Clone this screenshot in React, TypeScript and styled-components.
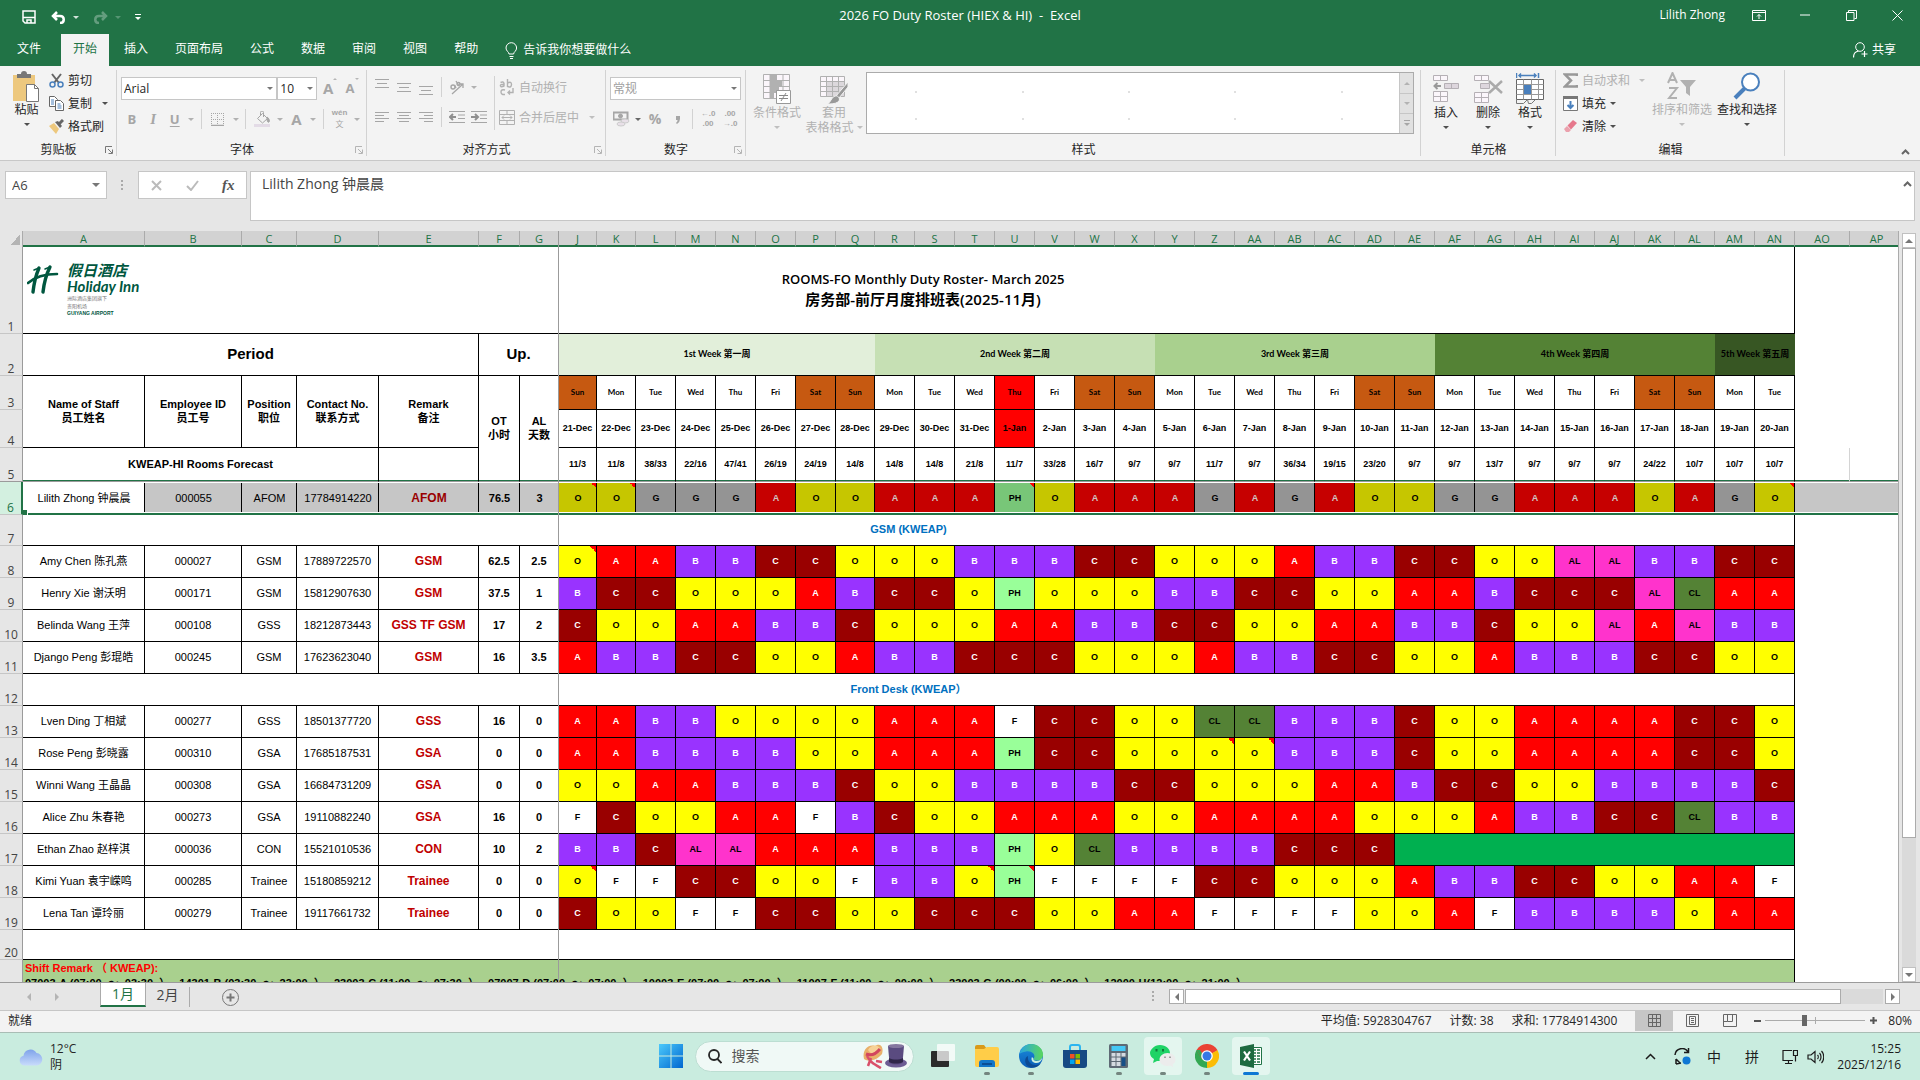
import React from "react";
import styled, { createGlobalStyle, css } from "styled-components";

const UI = `"Open Sans", "Noto Sans CJK SC", sans-serif`;
const SHEET = `"Liberation Sans", "Noto Sans CJK SC", sans-serif`;
const CALIBRI = `Lato, "Noto Sans CJK SC", sans-serif`;
const GREEN = "#217346";

const Global = createGlobalStyle`
  * { box-sizing: border-box; }
  html, body, #root { height: 100%; }
  body { margin: 0; overflow: hidden; font: 12px/16px ${UI}; color: #262626; }
  button, input, select, textarea { font: inherit; color: inherit; margin: 0; border-radius: 0; }
  button { padding: 0; border: 0; background: none; display: inline-flex; align-items: center; justify-content: center; white-space: nowrap; }
  svg { display: block; flex: none; }
`;

/* ---------- shell ---------- */
const Page = styled.div`
  height: 100vh;
  display: flex;
  flex-direction: column;
  background: #e6e6e6;
`;
const TitleBar = styled.header`
  height: 34px;
  display: grid;
  grid-template-columns: 1fr auto 1fr;
  background: ${GREEN};
  color: #fff;
`;
const QuickAccess = styled.div`
  display: flex;
  align-items: center;
  gap: 7px;
  padding-left: 22px;
`;
const QuickBtn = styled.button`
  &:disabled { color: #fff; opacity: 0.3; }
`;
const DocTitle = styled.h1`
  margin: 0;
  padding-top: 7px;
  font: inherit;
  font-size: 13px;
  white-space: pre;
`;
const WindowControls = styled.div`
  display: flex;
  justify-content: flex-end;
  height: 30px;
`;
const UserName = styled.button`
  padding-right: 11px;
`;
const WinBtn = styled.button`
  width: 46px;
`;
const TabBar = styled.nav`
  height: 32px;
  display: flex;
  gap: 3px;
  background: ${GREEN};
  color: #fff;
`;
const Tab = styled.button<{ $active?: boolean; $pad?: number }>`
  padding: 0 ${(p) => p.$pad ?? 12}px 2px;
  ${(p) => p.$active && css`background: #f3f3f3; color: ${GREEN};`}
`;
const TellMe = styled.button`
  gap: 5px;
  padding-left: 12px;
`;
const Share = styled.button`
  gap: 4px;
  margin-left: auto;
  padding-right: 24px;
`;

/* ---------- ribbon ---------- */
const Ribbon = styled.section`
  height: 95px;
  display: flex;
  background: #f3f3f3;
  border-bottom: 1px solid #c8c8c8;
`;
const GroupBox = styled.div<{ $w?: number }>`
  ${(p) => (p.$w ? `width: ${p.$w}px;` : "flex: 1; min-width: 0;")}
  display: flex;
  flex-direction: column;
  background: linear-gradient(#d2d2d2, #d2d2d2) right 4px / 1px 86px no-repeat;
`;
const GroupBody = styled.div<{ $col?: boolean; $top?: number; $gap?: number }>`
  height: 75px;
  display: flex;
  flex-direction: ${(p) => (p.$col ? "column" : "row")};
  gap: ${(p) => p.$gap ?? 0}px;
  padding: ${(p) => p.$top ?? 6}px 4px 0;
`;
const GroupFoot = styled.div`
  display: grid;
  grid-template-columns: 16px 1fr 16px;
  align-items: center;
  height: 18px;
  text-align: center;
`;
const Row = styled.div<{ $h?: number }>`
  display: flex;
  align-items: center;
  height: ${(p) => p.$h ?? 22}px;
`;
const Stack = styled.div<{ $w?: number; $gap?: number }>`
  display: flex;
  flex-direction: column;
  gap: ${(p) => p.$gap ?? 0}px;
  ${(p) => p.$w && `width: ${p.$w}px;`}
`;
const ToolBtn = styled.button<{ $w?: number }>`
  width: ${(p) => p.$w ?? 22}px;
  height: 22px;
  color: #a6a6a6;
`;
const SizeBtn = styled(ToolBtn)`
  align-items: flex-start;
`;
const CaretBtn = styled.button<{ $dark?: boolean }>`
  width: 12px;
  height: 22px;
  color: ${(p) => (p.$dark ? "#444" : "#a0a0a0")};
`;
const Sep = styled.i<{ $tall?: boolean }>`
  width: 1px;
  height: ${(p) => (p.$tall ? 54 : 20)}px;
  margin: 0 4px;
  background: #d2d2d2;
`;
const TextBtn = styled.button<{ $off?: boolean }>`
  height: 23px;
  gap: 4px;
  align-self: flex-start;
  color: ${(p) => (p.$off ? "#b1b1b1" : "#262626")};
`;
const Spacer = styled.i<{ $w: number }>`
  width: ${(p) => p.$w}px;
`;
const BigBtn = styled.button<{ $w: number; $off?: boolean }>`
  width: ${(p) => p.$w}px;
  height: 66px;
  flex-direction: column;
  justify-content: flex-start;
  color: ${(p) => (p.$off ? "#b1b1b1" : "#262626")};
`;
const BigIcon = styled.span`
  height: 33px;
  display: flex;
  align-items: center;
`;
const BigLine = styled.span`
  height: 15px;
  line-height: 15px;
  display: flex;
  align-items: center;
  gap: 3px;
`;
const SelectWrap = styled.span<{ $w: number; $off?: boolean }>`
  position: relative;
  width: ${(p) => p.$w}px;
  height: 23px;
  color: ${(p) => (p.$off ? "#a0a0a0" : "#262626")};
  select {
    width: 100%;
    height: 100%;
    padding: 0 2px;
    appearance: none;
    border: 1px solid #c6c6c6;
    background: #fff;
  }
  svg {
    position: absolute;
    right: 4px;
    top: 10px;
    color: #555;
    pointer-events: none;
  }
`;
const Gallery = styled.div`
  flex: 1;
  height: 62px;
  margin-left: 2px;
  margin-right: 3px;
  display: flex;
  border: 1px solid #ababab;
  background: #fff;
`;
const GalleryGrid = styled.div`
  flex: 1;
  display: grid;
  grid-template-columns: repeat(5, 1fr);
  padding-top: 5px;
`;
const GalleryItem = styled.button`
  padding-right: 8px;
  &::after {
    content: "";
    width: 2px;
    height: 2px;
    background: #e0e0e0;
  }
`;
const GalleryScroll = styled.div`
  width: 14px;
  display: grid;
  grid-template-rows: 1fr 1fr 1fr;
  background: #e1e1e1;
  color: #a6a6a6;
  border-left: 1px solid #c6c6c6;
  button + button { border-top: 1px solid #c6c6c6; }
`;
const Collapse = styled.button`
  width: 135px;
  align-items: flex-end;
  justify-content: flex-end;
  padding: 0 10px 5px 0;
  color: #666;
`;

/* ---------- formula bar ---------- */
const FormulaArea = styled.section`
  height: 70px;
  display: flex;
  align-items: flex-start;
  padding: 10px 5px 0;
`;
const NameBox = styled.div`
  width: 102px;
  height: 28px;
  display: flex;
  align-items: center;
  padding-right: 7px;
  border: 1px solid #c6c6c6;
  background: #fff;
  color: #555;
  input {
    width: 86px;
    padding: 0 6px;
    border: 0;
    background: none;
    color: #444;
    font-size: 13px;
  }
`;
const Dots = styled.i<{ $m: string }>`
  width: 2px;
  height: 11px;
  margin: ${(p) => p.$m};
  background: repeating-linear-gradient(#aaa 0 2px, transparent 2px 4px);
`;
const FxBox = styled.div`
  width: 109px;
  height: 28px;
  display: grid;
  grid-template-columns: repeat(3, 1fr);
  margin-right: 3px;
  border: 1px solid #c6c6c6;
  background: #fff;
  color: #555;
`;
const FormulaBox = styled.div`
  flex: 1;
  height: 50px;
  display: flex;
  border: 1px solid #c6c6c6;
  background: #fff;
  color: #666;
  textarea {
    flex: 1;
    padding: 1px 11px;
    border: 0;
    resize: none;
    outline: 0;
    background: none;
    color: #444;
    font-size: 14px;
    line-height: 22px;
  }
  button { width: 14px; height: 24px; }
`;

/* ---------- sheet ---------- */
const SheetArea = styled.main`
  flex: 1;
  min-height: 0;
  display: flex;
`;
const GridPane = styled.div`
  position: relative;
  flex: 1;
  overflow: hidden;
  background: #fff;
  border-right: 1px solid #ababab;
`;
const FreezeLine = styled.i`
  position: absolute;
  left: 558px;
  top: 0;
  bottom: 0;
  width: 1px;
  background: #9b9b9b;
`;
const Grid = styled.table`
  width: calc(100% + 6px);
  table-layout: fixed;
  border-collapse: separate;
  border-spacing: 0;
  font: 11px/14px ${SHEET};
  color: #000;
`;
const Tr = styled.tr<{ $h: number }>`
  height: ${(p) => p.$h}px;
`;
const ColHead = styled.th`
  padding: 0;
  border-right: 1px solid #ababab;
  border-bottom: 2px solid ${GREEN};
  background: #d2d2d2;
  color: ${GREEN};
  font: 11px/13px ${UI};
`;
const Corner = styled.th`
  padding: 0;
  border-right: 1px solid #ababab;
  background: linear-gradient(to bottom right, transparent 50%, #b4b4b4 50%) 11px 3px / 9px 11px no-repeat #e6e6e6;
`;
const RowHead = styled.th<{ $sel?: boolean; $frozen?: boolean }>`
  padding: 0;
  vertical-align: bottom;
  border-right: 1px solid #9b9b9b;
  border-bottom: 1px solid ${(p) => (p.$frozen ? "#9b9b9b" : "#c6c6c6")};
  background: #e6e6e6;
  color: #444;
  font: 12px/13px ${UI};
  ${(p) => p.$sel && css`background: #d3f0e0; color: ${GREEN}; border-right: 2px solid ${GREEN};`}
`;

type CellProps = {
  $bg?: string;
  $fg?: string;
  $bold?: boolean;
  $size?: number;
  $font?: string;
  $noted?: boolean;
  $edge?: "none" | "frozen" | "selected" | "bottom";
};
const edges = {
  none: css`border: 0;`,
  bottom: css`border-right: 0;`,
  frozen: css`
    border-bottom-color: #9b9b9b;
    box-shadow: inset 0 -1px ${GREEN};
  `,
  selected: css`
    border: 0;
    box-shadow: inset 0 -2px ${GREEN}, inset 0 -3px #fff, inset 0 1px #fff, inset -1px 0 #000;
  `,
};
const Cell = styled.td<CellProps>`
  position: relative;
  padding: 0 0 2px;
  overflow: hidden;
  text-align: center;
  vertical-align: middle;
  white-space: nowrap;
  border-right: 1px solid #000;
  border-bottom: 1px solid #000;
  background-color: ${(p) => p.$bg ?? "#fff"};
  ${(p) => p.$fg && `color: ${p.$fg};`}
  ${(p) => p.$bold && "font-weight: 700;"}
  ${(p) => p.$size && `font-size: ${p.$size}px;`}
  ${(p) => p.$font && `font-family: ${p.$font};`}
  ${(p) =>
    p.$noted &&
    css`
      background-image: linear-gradient(to bottom left, #f00 50%, transparent 50%);
      background-size: 6px 6px;
      background-position: right 0 top ${p.$edge === "selected" ? 1 : 0}px;
      background-repeat: no-repeat;
    `}
  ${(p) => p.$edge && edges[p.$edge]}
`;
const GuideCell = styled(Cell)<{ $last?: boolean }>`
  border-right-color: ${(p) => (p.$last ? "transparent" : "#d4d4d4")};
`;
const FillHandle = styled.i`
  position: absolute;
  left: 0;
  bottom: 0;
  width: 5px;
  height: 5px;
  background: ${GREEN};
  border-right: 1px solid #fff;
`;
const TitleCell = styled(Cell)`
  padding: 0 0 2px 29px;
  font: 600 13px/20px ${UI};
  span { font-size: 15px; }
`;
const Remarks = styled(Cell)`
  text-align: left;
  vertical-align: top;
  padding-left: 2px;
  white-space: pre;
  font-weight: 700;
`;
const RemarkTitle = styled.div`
  line-height: 16px;
  color: #f00;
`;
const Logo = styled.div`
  position: absolute;
  left: 27px;
  top: 31px;
  display: flex;
  gap: 8px;
  color: #00573f;
`;
const LogoText = styled.div`
  display: flex;
  flex-direction: column;
  b { font: italic 700 15px/16px ${CALIBRI}; }
  small { font: 5px/8px ${UI}; color: #777; }
  strong { font: 700 5px/6px ${SHEET}; }
`;

/* ---------- scroll bars ---------- */
const VScroll = styled.div`
  width: 21px;
  display: flex;
  flex-direction: column;
  padding: 2px 4px 0 3px;
  button { height: 15px; border: 1px solid #c0c0c0; background: #fff; color: #555; }
`;
const VTrack = styled.div`
  flex: 1;
  background: #dadada;
`;
const VThumb = styled.div`
  height: 82%;
  border: 1px solid #ababab;
  background: #fff;
`;
const SheetTabs = styled.div`
  height: 28px;
  display: flex;
  border-top: 1px solid #9b9b9b;
`;
const SheetNav = styled.button<{ $w: number }>`
  width: ${(p) => p.$w}px;
  height: 27px;
  color: #a8a8a8;
`;
const SheetTab = styled.button<{ $active?: boolean }>`
  width: ${(p) => (p.$active ? 46 : 43)}px;
  height: 24px;
  font-size: 14px;
  color: #444;
  ${(p) =>
    p.$active &&
    css`
      background: #fff;
      color: ${GREEN};
      border: solid #ababab;
      border-width: 0 1px;
      border-bottom: 2px solid ${GREEN};
    `}
`;
const AddSheet = styled.button`
  width: 82px;
  height: 20px;
  margin: 4px auto 0 0;
  border-left: 1px solid #ababab;
  color: #777;
`;
const HScroll = styled.div`
  width: 731px;
  height: 15px;
  margin: 6px 20px 0 0;
  display: flex;
  gap: 1px;
  button { width: 15px; border: 1px solid #ababab; background: #fff; color: #555; }
`;
const HTrack = styled.div`
  flex: 1;
  margin-right: 1px;
  background: #dadada;
`;
const HThumb = styled.div`
  width: 94%;
  height: 100%;
  border: 1px solid #ababab;
  background: #fff;
`;
const StatusBar = styled.footer`
  height: 23px;
  display: flex;
  align-items: center;
  padding: 0 8px 2px;
  background: #f3f3f3;
  border-top: 1px solid #c6c6c6;
  border-bottom: 1px solid #a9bdb5;
`;
const Stats = styled.div`
  display: flex;
  gap: 18px;
  margin: 0 18px 0 auto;
`;
const ViewBtn = styled.button<{ $on?: boolean }>`
  width: 38px;
  height: 20px;
  background: ${(p) => (p.$on ? "#c6c6c6" : "none")};
  color: #666;
`;
const ZoomBtn = styled.button`
  width: 16px;
  height: 20px;
  color: #555;
`;
const ZoomRange = styled.input`
  width: 100px;
  height: 20px;
  appearance: none;
  background: linear-gradient(#ababab, #ababab) 50px 50% / 1px 7px no-repeat,
    linear-gradient(#ababab, #ababab) 0 50% / 100% 1px no-repeat;
  &::-webkit-slider-thumb {
    appearance: none;
    width: 5px;
    height: 11px;
    background: #666;
  }
`;
const ZoomText = styled.button`
  margin-left: 7px;
`;

/* ---------- taskbar ---------- */
const Taskbar = styled.div`
  height: 47px;
  display: grid;
  grid-template-columns: 1fr auto 1fr;
  align-items: center;
  background: #c9ecdf;
`;
const Weather = styled.button`
  justify-self: start;
  gap: 7px;
  padding-left: 19px;
  text-align: left;
`;
const Apps = styled.div`
  display: flex;
  align-items: center;
  padding: 0 0 1px 11px;
`;
const AppBtn = styled.button<{ $on?: boolean }>`
  position: relative;
  width: 38px;
  height: 38px;
  margin: 0 3px;
  border-radius: 4px;
  background: ${(p) => (p.$on ? "rgba(255,255,255,.5)" : "none")};
`;
const RunMark = styled.i<{ $active?: boolean }>`
  position: absolute;
  bottom: 0;
  left: 50%;
  transform: translateX(-50%);
  width: ${(p) => (p.$active ? 16 : 6)}px;
  height: 3px;
  border-radius: 2px;
  background: ${(p) => (p.$active ? "#0f78d4" : "#74857f")};
`;
const SearchPill = styled.label`
  width: 219px;
  height: 31px;
  margin: 0 7px 0 12px;
  display: flex;
  align-items: center;
  gap: 10px;
  padding: 0 5px 0 12px;
  border-radius: 16px;
  background: #f0f9f6;
  border: 1px solid #bcded2;
  input {
    flex: 1;
    min-width: 0;
    padding: 0;
    border: 0;
    background: none;
    font-size: 14px;
  }
  input::placeholder { color: #555; opacity: 1; }
`;
const Tray = styled.div`
  justify-self: end;
  display: flex;
  align-items: center;
  padding-right: 19px;
  color: #1b1b1b;
`;
const TrayBtn = styled.button<{ $w: number }>`
  width: ${(p) => p.$w}px;
  font-size: 14px;
`;
const Clock = styled.time`
  width: 77px;
  text-align: right;
`;

/* ---------- icons ---------- */
type IconProps = { w: number; h: number; children: React.ReactNode; sw?: number };
const Svg = ({ w, h, sw = 1, children }: IconProps) => (
  <svg width={w} height={h} viewBox={`0 0 ${w} ${h}`} fill="none" stroke="currentColor" strokeWidth={sw} aria-hidden="true">
    {children}
  </svg>
);
const Tri = ({ dir = "down", s = 3 }: { dir?: "down" | "up" | "left" | "right"; s?: number }) => {
  const d = {
    down: `M0 0h${2 * s}l-${s} ${s}z`,
    up: `M0 ${s}h${2 * s}l-${s} -${s}z`,
    left: `M${s} 0v${2 * s}l-${s} -${s}z`,
    right: `M0 0v${2 * s}l${s} -${s}z`,
  }[dir];
  const flat = dir === "down" || dir === "up";
  return (
    <Svg w={flat ? 2 * s : s} h={flat ? s : 2 * s}>
      <path d={d} fill="currentColor" fillOpacity=".8" stroke="none" />
    </Svg>
  );
};
const Chevron = () => (
  <Svg w={9} h={6} sw={2}><path d="M1 5l3.500-3.500L8 5" /></Svg>
);
/* Text-alignment glyph: each entry is [y, x start, x end]. */
const Lines = ({ rows }: { rows: [number, number, number][] }) => (
  <Svg w={14} h={16}>
    {rows.map(([y, a, b]) => <path key={y} d={`M${a} ${y + 0.5}H${b}`} />)}
  </Svg>
);
const Launcher = ({ off }: { off?: boolean }) => (
  <Svg w={8} h={8}>
    <path d="M.5 7V.5H7M3 3l4 4M7.500 3.500v4h-4" stroke={off ? "#b4b4b4" : "#777"} />
  </Svg>
);
const Indent = ({ right }: { right?: boolean }) => (
  <Svg w={16} h={14}>
    <path d="M0 1.500h16M9 5h7M9 8.500h7M0 12.500h16" />
    <path d={right ? "M0 7h6M4 4l3 3-3 3" : "M7 7H1M4 4L1 7l3 3"} strokeWidth="2" stroke="#8f8f8f" />
  </Svg>
);

const LogoMark = () => (
  <svg width="32" height="32" viewBox="0 0 32 32" aria-hidden="true">
    <g fill="none" stroke="#00573f" strokeLinecap="round">
      <path d="M12 6C9 13 7 21 6 30" strokeWidth="3.400" />
      <path d="M23 5c-4 8-6 16-7 25" strokeWidth="3.400" />
      <path d="M1 21C9 14 19 12 30 12" strokeWidth="2.600" />
      <path d="M7 8l5-2M18 7l5-2" strokeWidth="1.600" />
    </g>
  </svg>
);

/* ---------- roster data ---------- */
const colWidths = [23, 122, 97, 55, 82, 100, 41, 39, 38, 39, 40, 40, 40, 40, 40, 39, ...Array(23).fill(40), 55];
const colNames =
  "A B C D E F G J K L M N O P Q R S T U V W X Y Z AA AB AC AD AE AF AG AH AI AJ AK AL AM AN AO AP".split(" ");
const weekdays = ["Sun", "Mon", "Tue", "Wed", "Thu", "Fri", "Sat"];
const days = Array.from({ length: 31 }, (_, i) => ({
  name: weekdays[i % 7],
  date: i < 11 ? `${21 + i}-Dec` : `${i - 10}-Jan`,
  color: i === 11 ? "#ff0000" : i % 7 === 0 || i % 7 === 6 ? "#c65911" : "#fff",
}));
const weeks: [string, number, string][] = [
  ["1st Week 第一周", 8, "#e2efda"],
  ["2nd Week 第二周", 7, "#c6e0b4"],
  ["3rd Week 第三周", 7, "#a9d08e"],
  ["4th Week 第四周", 7, "#548235"],
  ["5th Week 第五周", 2, "#375623"],
];
const forecast =
  "11/3 11/8 38/33 22/16 47/41 26/19 24/19 14/8 14/8 14/8 21/8 11/7 33/28 16/7 9/7 9/7 11/7 9/7 36/34 19/15 23/20 9/7 9/7 13/7 9/7 9/7 9/7 24/22 10/7 10/7 10/7".split(" ");

const shiftColors: Record<string, [string, string]> = {
  A: ["#ff0000", "#fff"],
  B: ["#9933ff", "#fff"],
  C: ["#990000", "#fff"],
  O: ["#ffff00", "#000"],
  G: ["#bfbfbf", "#000"],
  F: ["#fff", "#000"],
  PH: ["#99ff99", "#000"],
  AL: ["#ff33cc", "#000"],
  CL: ["#548235", "#000"],
};
const selectedColors: Record<string, [string, string]> = {
  A: ["#c60000", "#d0c6c6"],
  O: ["#c6c600", "#000"],
  G: ["#949494", "#000"],
  PH: ["#78c678", "#000"],
};

type Person = { row: number; info: string[]; shifts: string; leave?: number };
const lead: Person = {
  row: 6,
  info: ["Lilith Zhong 钟晨晨", "000055", "AFOM", "17784914220", "AFOM", "76.5", "3"],
  shifts: "O* O* G G G A O O A A A PH* O A A A G A G A O O G G A A A O A G O*",
};
const gsm: Person[] = [
  { row: 8, info: ["Amy Chen 陈孔燕", "000027", "GSM", "17889722570", "GSM", "62.5", "2.5"], shifts: "O* A A B B C C O O O B B B C C O O O A B B C C O O AL AL B B C C" },
  { row: 9, info: ["Henry Xie 谢沃明", "000171", "GSM", "15812907630", "GSM", "37.5", "1"], shifts: "B C C O O O A B C C O PH O O O B B C C O O A A B C C C AL CL A A" },
  { row: 10, info: ["Belinda Wang 王萍", "000108", "GSS", "18212873443", "GSS TF GSM", "17", "2"], shifts: "C O O A A B B C O O O A A B B C C O O A A B B C O O AL A AL B B" },
  { row: 11, info: ["Django Peng 彭琨皓", "000245", "GSM", "17623623040", "GSM", "16", "3.5"], shifts: "A B B C C O O A B B C C C O O O A B B C C O O A B B B C C O O" },
];
const desk: Person[] = [
  { row: 13, info: ["Lven Ding 丁相斌", "000277", "GSS", "18501377720", "GSS", "16", "0"], shifts: "A A B B O O O O A A A F C C O O CL CL B B B C O O A A A A C C O" },
  { row: 14, info: ["Rose Peng 彭晓露", "000310", "GSA", "17685187531", "GSA", "0", "0"], shifts: "A A B B B B O O A A A PH C C O O O* O* B B B C O O A A A A C C O" },
  { row: 15, info: ["Winni Wang 王晶晶", "000308", "GSA", "16684731209", "GSA", "0", "0"], shifts: "O O A A B B B C O O B B B B C C O O O A A B C C O O B B B B C" },
  { row: 16, info: ["Alice Zhu 朱春艳", "000273", "GSA", "19110882240", "GSA", "16", "0"], shifts: "F C O O A A F B C O O A A A O O A A A A O O O A B B C C CL B B" },
  { row: 17, info: ["Ethan Zhao 赵梓淇", "000036", "CON", "15521010536", "CON", "10", "2"], shifts: "B B C AL AL A A A B B B PH O CL B B B B C C C", leave: 10 },
  { row: 18, info: ["Kimi Yuan 袁宇嵘鸣", "000285", "Trainee", "15180859212", "Trainee", "0", "0"], shifts: "O* F F C C O O F B B O* PH* F F F F C C O O O A B B C C O O A A F" },
  { row: 19, info: ["Lena Tan 谭玲丽", "000279", "Trainee", "19117661732", "Trainee", "0", "0"], shifts: "C O O F F C C O O C C C O O A A F F F F O O A F B B B B O A A" },
];
const remarks = [
  "07003-A (07:00  ～  03:30  ）",
  "14301-B (03:30  ～  23:00  ）",
  "23003-C (11:00  ～  07:30  ）",
  "07007-D (07:00  ～  07:00  ）",
  "10003-E (07:00  ～  07:00  ）",
  "11007-F (11:00  ～  00:00  ）",
  "23003-G (00:00  ～  06:00  ）",
  "12000-H(12:00  ～  21:00  ）",
].join("   ");

const PersonRow = ({ p, selected }: { p: Person; selected?: boolean }) => {
  const edge = selected ? "selected" : undefined;
  return (
    <Tr $h={selected ? 33 : 32}>
      <RowHead $sel={selected}>{p.row}</RowHead>
      {p.info.map((text, i) => (
        <Cell
          key={i}
          $edge={edge}
          $bg={selected && i > 0 ? "#c6c6c6" : undefined}
          $fg={i === 4 ? (selected ? "#990000" : "#c00000") : undefined}
          $bold={i >= 4}
          $size={i === 4 ? 12 : undefined}
        >
          {text}
          {selected && i === 0 && <FillHandle />}
        </Cell>
      ))}
      {p.shifts.split(" ").map((mark, i) => {
        const code = mark.replace("*", "");
        const [bg, fg] = (selected ? selectedColors : shiftColors)[code];
        return (
          <Cell key={i} $edge={edge} $bg={bg} $fg={fg} $bold $size={9} $noted={mark.endsWith("*")}>
            {code}
          </Cell>
        );
      })}
      {p.leave && <Cell colSpan={p.leave} $bg="#00b050" />}
      {selected ? <SelectedTail colSpan={2} /> : <Cell colSpan={2} $edge="none" />}
    </Tr>
  );
};
const SelectedTail = styled.td`
  padding: 0;
  background: #c6c6c6;
  box-shadow: inset 0 -2px ${GREEN}, inset 0 -3px #fff, inset 0 1px #fff;
`;
const BandRow = ({ row, h, text }: { row: number; h: number; text?: string }) => (
  <Tr $h={h}>
    <RowHead>{row}</RowHead>
    <Cell colSpan={38} $bold $fg="#0070c0">{text}</Cell>
    <Cell colSpan={2} $edge="none" />
  </Tr>
);

const Sheet = () => (
  <Grid>
    <colgroup>
      {colWidths.map((w, i) => <col key={i} style={{ width: w }} />)}
      <col />
    </colgroup>
    <thead>
      <Tr $h={16}>
        <Corner />
        {colNames.map((c) => <ColHead key={c}>{c}</ColHead>)}
      </Tr>
    </thead>
    <tbody>
      <Tr $h={87}>
        <RowHead>1</RowHead>
        <TitleCell colSpan={38}>
          ROOMS-FO Monthly Duty Roster- March 2025
          <br />
          <span>房务部-前厅月度排班表(2025-11月)</span>
        </TitleCell>
        <Cell colSpan={2} $edge="none" />
      </Tr>
      <Tr $h={42}>
        <RowHead>2</RowHead>
        <Cell colSpan={5} $bold $size={15}>Period</Cell>
        <Cell colSpan={2} $bold $size={15}>Up.</Cell>
        {weeks.map(([name, span, bg]) => (
          <Cell key={name} colSpan={span} $bg={bg} $bold $size={9} $font={CALIBRI} $edge="bottom">{name}</Cell>
        ))}
        <Cell colSpan={2} $edge="none" />
      </Tr>
      <Tr $h={34}>
        <RowHead>3</RowHead>
        <Cell rowSpan={2} $bold>Name of Staff<br />员工姓名</Cell>
        <Cell rowSpan={2} $bold>Employee ID<br />员工号</Cell>
        <Cell rowSpan={2} $bold>Position<br />职位</Cell>
        <Cell rowSpan={2} $bold>Contact No.<br />联系方式</Cell>
        <Cell rowSpan={2} $bold>Remark<br />备注</Cell>
        <Cell rowSpan={3} $bold $edge="frozen">OT<br />小时</Cell>
        <Cell rowSpan={3} $bold $edge="frozen">AL<br />天数</Cell>
        {days.map((d) => <Cell key={d.date} $bg={d.color} $bold $size={8} $font={CALIBRI}>{d.name}</Cell>)}
        <Cell colSpan={2} $edge="none" />
      </Tr>
      <Tr $h={38}>
        <RowHead>4</RowHead>
        {days.map((d, i) => (
          <Cell key={d.date} $bg={i === 11 ? d.color : undefined} $bold $size={9}>{d.date}</Cell>
        ))}
        <Cell colSpan={2} $edge="none" />
      </Tr>
      <Tr $h={34}>
        <RowHead $frozen>5</RowHead>
        <Cell colSpan={4} $bold $edge="frozen">KWEAP-HI Rooms Forecast</Cell>
        <Cell $edge="frozen" />
        {forecast.map((f, i) => <Cell key={i} $bold $size={9} $edge="frozen">{f}</Cell>)}
        <GuideCell $edge="frozen" />
        <GuideCell $edge="frozen" $last />
      </Tr>
      <PersonRow p={lead} selected />
      <BandRow row={7} h={31} text="GSM (KWEAP)" />
      {gsm.map((p) => <PersonRow key={p.row} p={p} />)}
      <BandRow row={12} h={32} text="Front Desk (KWEAP）" />
      {desk.map((p) => <PersonRow key={p.row} p={p} />)}
      <BandRow row={20} h={30} />
      <Tr $h={120}>
        <RowHead>21</RowHead>
        <Remarks colSpan={38} $bg="#a9d08e">
          <RemarkTitle>Shift Remark （ KWEAP):</RemarkTitle>
          {remarks}
        </Remarks>
        <Cell colSpan={2} $edge="none" />
      </Tr>
    </tbody>
  </Grid>
);

/* ---------- ribbon content ---------- */
const Group = ({ name, w, launcher, children }: { name: string; w?: number; launcher?: "on" | "off"; children: React.ReactNode }) => (
  <GroupBox $w={w}>
    {children}
    <GroupFoot>
      <span />
      <span>{name}</span>
      {launcher && <button aria-label={`${name}设置`}><Launcher off={launcher === "off"} /></button>}
    </GroupFoot>
  </GroupBox>
);
const Pick = ({ w, label, value, off }: { w: number; label: string; value: string; off?: boolean }) => (
  <SelectWrap $w={w} $off={off}>
    <select aria-label={label} defaultValue={value}><option>{value}</option></select>
    <Tri />
  </SelectWrap>
);
const Letter = styled.span<{ $i?: boolean; $u?: boolean; $s?: number }>`
  font: 700 ${(p) => p.$s ?? 13}px/20px ${UI};
  ${(p) => p.$i && `font-style: italic; font-family: "Liberation Serif", serif; font-size: 15px;`}
  ${(p) => p.$u && "text-decoration: underline; text-underline-offset: 2px;"}
`;
const Tiny = styled.span`
  display: flex;
  flex-direction: column;
  align-items: center;
  font: 700 8px/10px ${SHEET};
`;
const TinyHan = styled.span`
  font: 8px/12px "Noto Sans CJK SC", sans-serif;
`;

const RibbonContent = () => (
  <Ribbon>
    <Group name="剪贴板" w={117} launcher="on">
      <GroupBody $top={3}>
        <BigBtn $w={45}>
          <BigIcon>
            <Svg w={30} h={32}>
              <path d="M1 5h22v26H1z" fill="#edc87e" stroke="none" />
              <path d="M5 8V4h4a3 3 0 016 0h4v4z" fill="#777" stroke="none" />
              <path d="M14.500 14.500h8l4 4v13h-12z" fill="#fff" stroke="#777" />
              <path d="M22.500 14.500v4h4" stroke="#777" />
            </Svg>
          </BigIcon>
          <BigLine>粘贴</BigLine>
          <BigLine><Tri /></BigLine>
        </BigBtn>
        <Stack>
          <TextBtn>
            <Svg w={15} h={15}>
              <path d="M3 1l7 9M12 1L5 10" stroke="#666" strokeWidth="2" />
              <circle cx="3.500" cy="11.500" r="2.500" stroke="#4a80bd" strokeWidth="1.500" />
              <circle cx="11.500" cy="11.500" r="2.500" stroke="#4a80bd" strokeWidth="1.500" />
            </Svg>
            剪切
          </TextBtn>
          <TextBtn>
            <Svg w={15} h={15}>
              <path d="M.5.500h5l3 3v7h-8z" fill="#fff" stroke="#666" />
              <path d="M6.500 4.500h5l3 3v7h-8z" fill="#fff" stroke="#666" />
              <path d="M2 4h3M2 6h3M2 8h3M8.500 8h3M8.500 10h4M8.500 12h4" stroke="#4a80bd" />
            </Svg>
            复制 <Spacer $w={2} /> <Tri />
          </TextBtn>
          <TextBtn>
            <Svg w={15} h={15}>
              <path d="M0 7l5-3 5 6-3 5z" fill="#edc87e" stroke="none" />
              <path d="M6 3l3-1 4 5-2 2z" fill="#666" stroke="none" />
              <path d="M10 5l4-4" stroke="#666" strokeWidth="3" />
            </Svg>
            格式刷
          </TextBtn>
        </Stack>
      </GroupBody>
    </Group>

    <Group name="字体" w={250} launcher="off">
      <GroupBody $col $top={11} $gap={8}>
        <Row $h={23}>
          <Pick w={157} label="字体名称" value="Arial" />
          <Pick w={40} label="字号" value="10" />
          <Spacer $w={2} />
          <SizeBtn aria-label="增大字号"><Letter $s={15}>A</Letter><Tri dir="up" s={2} /></SizeBtn>
          <SizeBtn aria-label="减小字号"><Letter>A</Letter><Tri s={2} /></SizeBtn>
        </Row>
        <Row>
          <ToolBtn aria-label="加粗"><Letter>B</Letter></ToolBtn>
          <ToolBtn aria-label="倾斜"><Letter $i>I</Letter></ToolBtn>
          <ToolBtn aria-label="下划线"><Letter $u>U</Letter></ToolBtn>
          <CaretBtn aria-label="下划线样式"><Tri /></CaretBtn>
          <Sep />
          <ToolBtn $w={24} aria-label="边框">
            <Svg w={13} h={13}>
              <path d="M.5 0v12M6.500 0v12M12.500 0v12M0 .500h13M0 6.500h13" strokeDasharray="1 1" />
              <path d="M0 12.500h13" strokeWidth="1.500" />
            </Svg>
          </ToolBtn>
          <CaretBtn aria-label="边框样式"><Tri /></CaretBtn>
          <Sep />
          <ToolBtn $w={24} aria-label="填充颜色">
            <Svg w={17} h={16}>
              <path d="M3.500 7.500l5-5 5 5-5 4.500zM6.500 5V1.500a1.500 1.500 0 013 0V6" fill="none" />
              <path d="M13 6c2 1 3 4 2 5s-2-1-2-3z" fill="currentColor" />
              <path d="M0 13h16v3H0z" fill="#e3dbe6" stroke="none" />
            </Svg>
          </ToolBtn>
          <CaretBtn aria-label="填充颜色列表"><Tri /></CaretBtn>
          <ToolBtn aria-label="字体颜色"><Letter $s={15}>A</Letter></ToolBtn>
          <CaretBtn aria-label="字体颜色列表"><Tri /></CaretBtn>
          <Sep />
          <ToolBtn $w={24} aria-label="拼音"><Tiny><span>wén</span><TinyHan>文</TinyHan></Tiny></ToolBtn>
          <CaretBtn aria-label="拼音设置"><Tri /></CaretBtn>
        </Row>
      </GroupBody>
    </Group>

    <Group name="对齐方式" w={239} launcher="off">
      <GroupBody $top={10}>
        <Stack $w={119} $gap={8}>
          <Row>
            <ToolBtn aria-label="顶端对齐"><Lines rows={[[0, 0, 14], [4, 2, 12], [8, 0, 14]]} /></ToolBtn>
            <ToolBtn aria-label="垂直居中"><Lines rows={[[4, 0, 14], [8, 2, 12], [12, 0, 14]]} /></ToolBtn>
            <ToolBtn aria-label="底端对齐"><Lines rows={[[7, 0, 14], [11, 2, 12], [15, 0, 14]]} /></ToolBtn>
            <Sep />
            <ToolBtn aria-label="方向">
              <Svg w={16} h={15}>
                <path d="M3 14L14 4M10 4h4v4" strokeWidth="1.300" />
                <circle cx="4" cy="7" r="2" strokeWidth="1.400" />
                <path d="M5.500 5l1.500 3M7 1l3 5" strokeWidth="1.400" />
                <circle cx="9.500" cy="4" r="1.500" strokeWidth="1.300" />
              </Svg>
            </ToolBtn>
            <CaretBtn aria-label="方向选项"><Tri /></CaretBtn>
          </Row>
          <Row>
            <ToolBtn aria-label="左对齐"><Lines rows={[[3, 0, 14], [6, 0, 9], [9, 0, 14], [12, 0, 9]]} /></ToolBtn>
            <ToolBtn aria-label="居中"><Lines rows={[[3, 0, 14], [6, 2, 12], [9, 0, 14], [12, 2, 12]]} /></ToolBtn>
            <ToolBtn aria-label="右对齐"><Lines rows={[[3, 0, 14], [6, 5, 14], [9, 0, 14], [12, 5, 14]]} /></ToolBtn>
            <Sep />
            <ToolBtn aria-label="减少缩进量"><Indent /></ToolBtn>
            <ToolBtn aria-label="增加缩进量"><Indent right /></ToolBtn>
          </Row>
        </Stack>
        <Sep $tall />
        <Stack $gap={7}>
          <TextBtn $off>
            <Svg w={16} h={17} sw={1.4}>
              <path d="M1.500 3.500q3-1.500 3.500 1v3M5 5.500H3q-2 0-1.500 1.500T5 7M8.500 0v8M8.500 4q4-2 4 1.500t-4 2" />
              <path d="M6 11q-4-1-4 2t4 2.500M14 9v4.500H9M11 11.500l-2 2 2 2" />
            </Svg>
            自动换行
          </TextBtn>
          <TextBtn $off>
            <Svg w={16} h={15}><path d="M.5.500h15v14H.500zM.5 4.500h15M.5 10.500h15M8 .500v4M8 10.500v4M3 7.500h10M5 5.500l-2 2 2 2M11 5.500l2 2-2 2" /></Svg>
            合并后居中 <Spacer $w={2} /> <Tri />
          </TextBtn>
        </Stack>
      </GroupBody>
    </Group>

    <Group name="数字" w={140} launcher="off">
      <GroupBody $col $top={11} $gap={8}>
        <Row $h={23}><Pick w={131} label="数字格式" value="常规" off /></Row>
        <Row>
          <ToolBtn aria-label="会计数字格式">
            <Svg w={17} h={16}>
              <path d="M.5 1.500h14v7H.500z" strokeWidth="2" />
              <circle cx="7.500" cy="5" r="2" fill="currentColor" />
              <ellipse cx="12" cy="10" rx="4" ry="2" fill="#e8e0e8" stroke="#ccc" />
              <ellipse cx="8" cy="13" rx="4" ry="2" fill="#e8e0e8" stroke="#ccc" />
            </Svg>
          </ToolBtn>
          <CaretBtn $dark aria-label="货币列表"><Tri /></CaretBtn>
          <ToolBtn aria-label="百分比"><Letter $s={14}>%</Letter></ToolBtn>
          <ToolBtn aria-label="千位分隔">
            <Svg w={5} h={9}><path d="M1 1h4v3q0 3-3 5l-1-1q2-2 1.500-3H1z" fill="currentColor" stroke="none" /></Svg>
          </ToolBtn>
          <Sep />
          <ToolBtn aria-label="增加小数位数"><Tiny><span>←.0</span><span>.00</span></Tiny></ToolBtn>
          <ToolBtn aria-label="减少小数位数"><Tiny><span>.00</span><span>→.0</span></Tiny></ToolBtn>
        </Row>
      </GroupBody>
    </Group>

    <Group name="样式">
      <GroupBody>
        <BigBtn $w={54} $off>
          <BigIcon>
            <Svg w={30} h={31}>
              <path d="M1.500 1.500h26v24h-26z" fill="#fbf6fb" />
              <path d="M1.500 7.500h26M1.500 13.500h26M1.500 19.500h26M8 1.500v24M14.500 1.500v24M21 1.500v24" />
              <path d="M8 2h6v5H8zM8 8h12v5H8zM8 14h9v5H8zM8 20h4v5H8z" fill="currentColor" stroke="none" />
              <path d="M14.500 17.500h14v13h-14z" fill="#fff" stroke="#999" />
              <path d="M17 22.500h9M17 25.500h9M24 20l-5 8" stroke="#888" />
            </Svg>
          </BigIcon>
          <BigLine>条件格式</BigLine>
          <BigLine><Tri /></BigLine>
        </BigBtn>
        <BigBtn $w={60} $off>
          <BigIcon>
            <Svg w={30} h={30}>
              <path d="M1.500 2.500h24v20h-24z" fill="#fbf6fb" />
              <path d="M8 8h17v14H8z" fill="#dcd8dc" stroke="none" />
              <path d="M1.500 7.500h24M1.500 12.500h24M1.500 17.500h24M7.500 2.500v20M13.500 2.500v20M19.500 2.500v20" />
              <path d="M29 8L17 22l3 2L29 13z" fill="#999" stroke="#f3f3f3" />
              <path d="M8 30c4-1 4-7 8-8s6 4 3 6-7 2-11 2z" fill="#999" stroke="#f3f3f3" />
            </Svg>
          </BigIcon>
          <BigLine>套用</BigLine>
          <BigLine>表格格式 <Tri /></BigLine>
        </BigBtn>
        <Gallery>
          <GalleryGrid>
            {Array.from({ length: 10 }, (_, i) => <GalleryItem key={i} aria-label={`样式 ${i + 1}`} />)}
          </GalleryGrid>
          <GalleryScroll>
            <button aria-label="向上"><Tri dir="up" /></button>
            <button aria-label="向下"><Tri /></button>
            <button aria-label="更多">
              <Svg w={6} h={7}><path d="M0 .500h6" /><path d="M0 3h6L3 6z" fill="currentColor" stroke="none" /></Svg>
            </button>
          </GalleryScroll>
        </Gallery>
      </GroupBody>
    </Group>

    <Group name="单元格" w={135}>
      <GroupBody>
        <BigBtn $w={42}>
          <BigIcon>
            <Svg w={28} h={28}>
              <g stroke="#b5b0b5" fill="#fbf6fb">
                <path d="M1.500.500h14v5h-14zM8.500.500v5M1.500 16.500h14v10h-14zM8.500 16.500v10M1.500 21.500h14" />
                <path d="M12.500 8.500h14v5h-14zM19.500 8.500v5" fill="#ddd6dd" />
              </g>
              <path d="M9 11H3M5.500 8L2.500 11l3 3" stroke="#999" strokeWidth="2" />
            </Svg>
          </BigIcon>
          <BigLine>插入</BigLine>
          <BigLine><Tri /></BigLine>
        </BigBtn>
        <BigBtn $w={42}>
          <BigIcon>
            <Svg w={30} h={28}>
              <g stroke="#b5b0b5" fill="#fbf6fb">
                <path d="M1.500.500h14v5h-14zM8.500.500v5M1.500 17.500h14v10h-14zM8.500 17.500v10M1.500 22.500h14" />
                <path d="M7.500 8.500h9v5h-9z" fill="#ddd6dd" />
              </g>
              <path d="M16 6l13 12M29 6L16 18" stroke="#aaa" strokeWidth="2.500" />
            </Svg>
          </BigIcon>
          <BigLine>删除</BigLine>
          <BigLine><Tri /></BigLine>
        </BigBtn>
        <BigBtn $w={42}>
          <BigIcon>
            <Svg w={28} h={31}>
              <path d="M.5 0v5M22.500 0v5M3 2.500h17M5 .500l-2 2 2 2M18 .500l2 2-2 2" stroke="#4a80bd" strokeWidth="1.500" />
              <path d="M.5 6.500h27v20H.500z" fill="#fff" stroke="#666" />
              <path d="M.5 11.500h27M.5 21.500h27M7.500 6.500v20M15.500 6.500v20M22.500 6.500v20M.5 16.500h7M15.500 16.500h12" stroke="#999" />
              <path d="M8 12h7v9H8z" fill="#4a80bd" stroke="none" />
              <path d="M.5 26.500v4h7l4-4 1 4h3l4-4" stroke="#777" />
            </Svg>
          </BigIcon>
          <BigLine>格式</BigLine>
          <BigLine><Tri /></BigLine>
        </BigBtn>
      </GroupBody>
    </Group>

    <Group name="编辑" w={229}>
      <GroupBody $top={3}>
        <Spacer $w={3} />
        <Stack $w={87}>
          <TextBtn $off>
            <Svg w={15} h={15} sw={2.5}><path d="M14 3V1.500H2L8 7.500l-6 6h12V12" stroke="#999" /></Svg>
            自动求和 <Spacer $w={1} /> <Tri />
          </TextBtn>
          <TextBtn>
            <Svg w={15} h={15}>
              <path d="M.5.500h14v14H.500z" fill="#fff" stroke="#777" />
              <path d="M0 0h15v3H0z" fill="#777" stroke="none" />
              <path d="M7.500 5v7M4.500 9l3 3 3-3" stroke="#4a80bd" strokeWidth="2" />
            </Svg>
            填充 <Tri />
          </TextBtn>
          <TextBtn>
            <Svg w={15} h={15}>
              <path d="M1 10l3-3 4 4-2 2H3z" fill="#eba1ad" stroke="none" />
              <path d="M4.500 6.500L10 1l4 3-6 6.500z" fill="#e6788c" stroke="none" />
            </Svg>
            清除 <Tri />
          </TextBtn>
        </Stack>
        <BigBtn $w={64} $off>
          <BigIcon>
            <Svg w={30} h={28} sw={2}>
              <path d="M1 11L5.500 1 10 11M3 8h5M2 16h8L2 26h8" />
              <path d="M13 8h16l-6 7v9l-4-3v-6z" fill="currentColor" stroke="none" />
            </Svg>
          </BigIcon>
          <BigLine>排序和筛选</BigLine>
          <BigLine><Tri /></BigLine>
        </BigBtn>
        <BigBtn $w={66}>
          <BigIcon>
            <Svg w={28} h={28}>
              <circle cx="17.500" cy="10" r="8.500" fill="#fff" stroke="#4a80bd" strokeWidth="2" />
              <path d="M11.500 16.500L2 26" stroke="#4a80bd" strokeWidth="4" />
            </Svg>
          </BigIcon>
          <BigLine>查找和选择</BigLine>
          <BigLine><Tri /></BigLine>
        </BigBtn>
      </GroupBody>
    </Group>
    <Collapse aria-label="折叠功能区"><Chevron /></Collapse>
  </Ribbon>
);

/* ---------- taskbar icons ---------- */
const Hats = () => (
  <svg width="46" height="28" viewBox="0 0 46 28" aria-hidden="true">
    <path d="M2 17C0 8 6 2 13 4c6-4 9 2 7 8-4 5-12 9-18 5z" fill="#e9b06a" />
    <path d="M6 8c3-6 11-6 13 0-3 5-8 7-13 0z" fill="#f7d197" />
    <path d="M4 12c5 2 10 0 14-5" stroke="#d2455d" strokeWidth="3" fill="none" />
    <path d="M5 14c3 6 7 8 14 12M9 16l-3 8M14 19l6 1" stroke="#d9506a" strokeWidth="2.500" fill="none" />
    <ellipse cx="34" cy="21" rx="11" ry="4.500" fill="#6c5c93" />
    <path d="M26 4h16l-1.500 17c-4 2-9 2-13 0z" fill="#5a4b80" />
    <ellipse cx="34" cy="4" rx="8" ry="2" fill="#85769f" />
    <path d="M27 16c4 2 10 2 14 0v4c-4 2-10 2-14 0z" fill="#2f2649" />
  </svg>
);
const WinLogo = () => (
  <svg width="24" height="24" viewBox="0 0 24 24" aria-hidden="true">
    <defs><linearGradient id="win" x1="0" y1="0" x2="1" y2="1"><stop stopColor="#4cc9fb" /><stop offset="1" stopColor="#0067d0" /></linearGradient></defs>
    <path d="M0 0h11.500v11.500H0zM12.500 0H24v11.500H12.500zM0 12.500h11.500V24H0zM12.500 12.500H24V24H12.500z" fill="url(#win)" />
  </svg>
);
const TaskViewIcon = () => (
  <svg width="24" height="24" viewBox="0 0 24 24" aria-hidden="true">
    <rect x="0" y="7" width="18" height="16" rx="1" fill="#2b2b2b" />
    <rect x="6" y="0" width="18" height="17" rx="1" fill="#fff" fillOpacity=".75" />
  </svg>
);
const FolderIcon = () => (
  <svg width="24" height="24" viewBox="0 0 24 24" aria-hidden="true">
    <path d="M0 3q0-2 2-2h7l3 4H0z" fill="#d99a1a" />
    <path d="M0 5h9l3-2h10q2 0 2 2v16q0 2-2 2H2q-2 0-2-2z" fill="#ffcd48" />
    <path d="M4 23v-4q0-3 3-3h10q3 0 3 3v4z" fill="#1377c9" />
    <path d="M7 19h10v2H7z" fill="#0b4f95" />
  </svg>
);
const EdgeIcon = () => (
  <svg width="24" height="24" viewBox="0 0 24 24" aria-hidden="true">
    <defs>
      <linearGradient id="e1" x1="0" y1="0" x2="1" y2="0"><stop stopColor="#2aa5e0" /><stop offset="1" stopColor="#5bd75c" /></linearGradient>
      <linearGradient id="e2" x1="0" y1="0" x2="0" y2="1"><stop stopColor="#1b8fe0" /><stop offset="1" stopColor="#0b5bb5" /></linearGradient>
    </defs>
    <circle cx="12" cy="12" r="12" fill="url(#e2)" />
    <path d="M.5 10C2 3.500 7 0 12 0c7 0 12 5 12 10.500 0 4-3 6-6.500 6-2.500 0-3.500-1-2.500-2.500C17 10 12 6.500 7 7.500 4 8 1.500 9 .500 10z" fill="url(#e1)" />
    <path d="M9 12c-1 5 3 9.500 8 9 2 0 4-1 5-2-3 5-10 6-14 2.500C5 18 6 13 9 12z" fill="#0d4a93" />
    <path d="M14.500 14.500c-1 3 6 4 9-1-1 4-4 6-7 5.500s-5-3-3.500-6z" fill="#c9ecdf" />
  </svg>
);
const StoreIcon = () => (
  <svg width="24" height="24" viewBox="0 0 24 24" aria-hidden="true">
    <path d="M7 6V3q0-2 2-2h6q2 0 2 2v3" stroke="#2bb5f0" strokeWidth="2" fill="none" />
    <path d="M0 6h24v15q0 3-3 3H3q-3 0-3-3z" fill="#174a84" />
    <path d="M7 10h4.500v4.500H7z" fill="#f25022" /><path d="M12.500 10H17v4.500h-4.500z" fill="#7fba00" />
    <path d="M7 15.500h4.500V20H7z" fill="#00a4ef" /><path d="M12.500 15.500H17V20h-4.500z" fill="#ffb900" />
  </svg>
);
const CalcIcon = () => (
  <svg width="19" height="24" viewBox="0 0 19 24" aria-hidden="true">
    <rect width="19" height="24" rx="1.500" fill="#5e6a75" />
    <path d="M2.500 2h14v5h-14z" fill="#45c8f5" />
    <path d="M2.500 9h4v3.500h-4zM7.500 9h4v3.500h-4zM12.500 9h4v3.500h-4zM2.500 13.500h4V17h-4zM7.500 13.500h4V17h-4zM2.500 18h4v4h-4zM7.500 18h4v4h-4z" fill="#d5dbe1" />
    <path d="M12.500 13.500h4V22h-4z" fill="#164f86" />
  </svg>
);
const WeChatIcon = () => (
  <svg width="26" height="24" viewBox="0 0 26 24" aria-hidden="true">
    <path d="M10 1c6 0 10 4 10 8s-4 8-10 8l-3 0-4 2 1-4c-2-1-4-3-4-6s4-8 10-8z" fill="#1fd366" />
    <path d="M17.500 9c5 0 8 3 8 6.500 0 2-1 4-3 5l1 3-3-2-3 .500c-5 0-8-3-8-6.500S13 9 17.500 9z" fill="#ececec" />
    <path d="M6.500 5v2.500M13 5v2.500" stroke="#11783c" strokeWidth="2" /><path d="M15 12.500V14M20 12.500V14" stroke="#888" strokeWidth="1.500" />
  </svg>
);
const ChromeIcon = () => (
  <svg width="24" height="24" viewBox="0 0 24 24" aria-hidden="true">
    <path d="M12 12L1.600 6A12 12 0 0122.400 6z" fill="#ea4335" />
    <path d="M12 12L22.400 6A12 12 0 0112 24z" fill="#fbbc05" />
    <path d="M12 12v12A12 12 0 011.600 6z" fill="#34a853" />
    <path d="M1.600 6l5.200 9L12 12zM22.400 6H12v6z" fill="#ea4335" /><path d="M12 24l5.200-9L12 12z" fill="#fbbc05" />
    <path d="M1.600 6l5.200 9 1-4L5 6z" fill="#34a853" />
    <circle cx="12" cy="12" r="5.800" fill="#fff" /><circle cx="12" cy="12" r="4.500" fill="#3578e5" />
  </svg>
);
const ExcelIcon = () => (
  <svg width="22" height="24" viewBox="0 0 22 24" aria-hidden="true">
    <path d="M12 3.500h9.500v17H12z" fill="#fff" stroke="#217346" />
    <path d="M13 6h3M13 9h3M13 12h3M13 15h3M13 18h3M17 6h3M17 9h3M17 12h3M17 15h3M17 18h3" stroke="#217346" strokeWidth="1.500" />
    <path d="M0 3l14-3v24L0 21z" fill="#1d6b40" />
    <path d="M4 7.500l6 9M10 7.500l-6 9" stroke="#fff" strokeWidth="2.200" />
  </svg>
);
const CloudIcon = () => (
  <svg width="24" height="18" viewBox="0 0 24 18" aria-hidden="true">
    <defs><linearGradient id="cl" x1="0" y1="0" x2="0" y2="1"><stop stopColor="#7fa3ea" /><stop offset="1" stopColor="#c8dbfb" /></linearGradient></defs>
    <path d="M5 17.500a5 5 0 01-.500-9.800A7 7 0 0117.500 5 6.300 6.300 0 0118 17.500z" fill="url(#cl)" />
  </svg>
);

const apps: [string, React.ReactNode, "" | "run" | "front" | "active"][] = [
  ["任务视图", <TaskViewIcon />, ""],
  ["文件资源管理器", <FolderIcon />, "run"],
  ["Edge", <EdgeIcon />, "run"],
  ["应用商店", <StoreIcon />, ""],
  ["计算器", <CalcIcon />, "run"],
  ["微信", <WeChatIcon />, "front"],
  ["Chrome", <ChromeIcon />, "run"],
  ["Excel", <ExcelIcon />, "active"],
];

const tabs = ["插入", "页面布局", "公式", "数据", "审阅", "视图", "帮助"];

export default function App() {
  return (
    <Page>
      <Global />
      <TitleBar>
        <QuickAccess>
          <QuickBtn aria-label="保存">
            <Svg w={14} h={14} sw={1.5}><path d="M1 1h12v12H3l-2-2zM1.500 7.500h11M5 13v-3h4v3" /></Svg>
          </QuickBtn>
          <Spacer $w={1} />
          <QuickBtn aria-label="撤消">
            <Svg w={15} h={13} sw={2.5}><path d="M6 1L2 5l4 4M2 5h7c5 0 5 7 0 7" /></Svg>
          </QuickBtn>
          <Tri />
          <Spacer $w={0} />
          <QuickBtn aria-label="恢复" disabled>
            <Svg w={15} h={13} sw={2.5}><path d="M9 1l4 4-4 4M13 5H6c-5 0-5 7 0 7" /></Svg>
          </QuickBtn>
          <QuickBtn aria-label="恢复列表" disabled><Tri /></QuickBtn>
          <Spacer $w={0} />
          <QuickBtn aria-label="自定义快速访问工具栏">
            <Svg w={6} h={7}><path d="M0 .500h6" /><path d="M0 3h6L3 6z" fill="currentColor" stroke="none" /></Svg>
          </QuickBtn>
        </QuickAccess>
        <DocTitle>{"2026 FO Duty Roster (HIEX & HI)  -  Excel"}</DocTitle>
        <WindowControls>
          <UserName>Lilith Zhong</UserName>
          <WinBtn aria-label="功能区显示选项">
            <Svg w={14} h={11}><path d="M.5.500h13v10H.500zM.5 2.500h13M7 9V4.500M5 6.500l2-2 2 2" /></Svg>
          </WinBtn>
          <WinBtn aria-label="最小化"><Svg w={10} h={2}><path d="M0 1h10" /></Svg></WinBtn>
          <WinBtn aria-label="还原"><Svg w={11} h={11}><path d="M.5 2.500h7.500v8H.500zM2.500 2.500v-2h8v8h-2" /></Svg></WinBtn>
          <WinBtn aria-label="关闭"><Svg w={11} h={11}><path d="M.5.500l10 10M10.500.500l-10 10" /></Svg></WinBtn>
        </WindowControls>
      </TitleBar>
      <TabBar>
        <Tab $pad={17}>文件</Tab>
        <Tab $active>开始</Tab>
        {tabs.map((t) => <Tab key={t}>{t}</Tab>)}
        <TellMe>
          <Svg w={13} h={17}><path d="M4 12c0-2-3-3-3-6a5.300 5.300 0 0110.600 0c0 3-3 4-3 6zM4.500 14.500h4M5 16.500h3" /></Svg>
          告诉我你想要做什么
        </TellMe>
        <Share>
          <Svg w={15} h={16}><circle cx="7" cy="5" r="4.300" /><path d="M.5 15.500c0-4 2-6 5-6.500M11.500 9v6M8.500 12h6" strokeWidth="1.200" /></Svg>
          共享
        </Share>
      </TabBar>
      <RibbonContent />

      <FormulaArea>
        <NameBox><input aria-label="名称框" defaultValue="A6" /><Tri s={4} /></NameBox>
        <Dots $m="9px 15px 0 14px" />
        <FxBox>
          <button aria-label="取消"><Svg w={11} h={11} sw={2}><path d="M1 1l9 9M10 1l-9 9" stroke="#bbb" /></Svg></button>
          <button aria-label="输入"><Svg w={13} h={11} sw={2}><path d="M1 6l4 4 7-9" stroke="#bbb" /></Svg></button>
          <button aria-label="插入函数"><Letter $i>fx</Letter></button>
        </FxBox>
        <FormulaBox>
          <textarea aria-label="编辑栏" defaultValue="Lilith Zhong 钟晨晨" />
          <button aria-label="折叠编辑栏"><Chevron /></button>
        </FormulaBox>
      </FormulaArea>

      <SheetArea>
        <GridPane>
          <Sheet />
          <FreezeLine />
          <Logo>
            <LogoMark />
            <LogoText>
              <b>假日酒店</b>
              <b>Holiday Inn</b>
              <small>洲际酒店集团旗下</small>
              <small>贵阳机场</small>
              <strong>GUIYANG AIRPORT</strong>
            </LogoText>
          </Logo>
        </GridPane>
        <VScroll>
          <button aria-label="向上滚动"><Tri dir="up" s={4} /></button>
          <VTrack><VThumb /></VTrack>
          <button aria-label="向下滚动"><Tri s={4} /></button>
        </VScroll>
      </SheetArea>

      <SheetTabs>
        <Spacer $w={15} />
        <SheetNav $w={28} aria-label="上一张"><Tri dir="left" s={4} /></SheetNav>
        <SheetNav $w={28} aria-label="下一张"><Tri dir="right" s={4} /></SheetNav>
        <Spacer $w={29} />
        <SheetTab $active>1月</SheetTab>
        <SheetTab>2月</SheetTab>
        <AddSheet aria-label="新工作表">
          <Svg w={17} h={17}><circle cx="8.500" cy="8.500" r="8" /><path d="M8.500 4.500v8M4.500 8.500h8" strokeWidth="2" /></Svg>
        </AddSheet>
        <Dots $m="8px 15px 0 0" />
        <HScroll>
          <button aria-label="向左滚动"><Tri dir="left" s={4} /></button>
          <HTrack><HThumb /></HTrack>
          <button aria-label="向右滚动"><Tri dir="right" s={4} /></button>
        </HScroll>
      </SheetTabs>
      <StatusBar>
        <span>就绪</span>
        <Stats>
          <span>平均值: 5928304767</span>
          <span>计数: 38</span>
          <span>求和: 17784914300</span>
        </Stats>
        <ViewBtn $on aria-label="普通"><Svg w={13} h={13}><path d="M.5.500h12v12H.500zM.5 4.500h12M.5 8.500h12M4.500.500v12M8.500.500v12" /></Svg></ViewBtn>
        <ViewBtn aria-label="页面布局"><Svg w={13} h={13}><path d="M.5.500h12v12H.500zM3.500 2.500h6v8h-6zM5 4.500h3M5 6.500h3M5 8.500h3" /></Svg></ViewBtn>
        <ViewBtn aria-label="分页预览"><Svg w={14} h={13}><path d="M.5.500h13v12H.500zM4.500.500v7h5v-7M.5 7.500h4" /></Svg></ViewBtn>
        <ZoomBtn aria-label="缩小"><Svg w={7} h={2} sw={2}><path d="M0 1h7" /></Svg></ZoomBtn>
        <ZoomRange type="range" aria-label="显示比例" min={0} max={100} defaultValue={39} />
        <ZoomBtn aria-label="放大"><Svg w={7} h={7} sw={2}><path d="M0 3.500h7M3.500 0v7" /></Svg></ZoomBtn>
        <ZoomText>80%</ZoomText>
      </StatusBar>

      <Taskbar>
        <Weather><CloudIcon /><span>12°C<br />阴</span></Weather>
        <Apps>
          <button aria-label="开始"><WinLogo /></button>
          <SearchPill>
            <Svg w={14} h={15} sw={1.8}><circle cx="6" cy="6" r="5" /><path d="M9.500 10l4 4" /></Svg>
            <input placeholder="搜索" aria-label="搜索" />
            <Hats />
          </SearchPill>
          {apps.map(([name, icon, state]) => (
            <AppBtn key={name} aria-label={name} $on={state === "front" || state === "active"}>
              {icon}
              {state && <RunMark $active={state === "active"} />}
            </AppBtn>
          ))}
        </Apps>
        <Tray>
          <TrayBtn $w={32} aria-label="显示隐藏的图标"><Svg w={11} h={7} sw={1.5}><path d="M1 6l4.500-4.500L10 6" /></Svg></TrayBtn>
          <TrayBtn $w={32} aria-label="更新">
            <Svg w={17} h={17} sw={1.5}><path d="M1 7a7 7 0 0113-3M14.500 0v4.500H10M2 16l5-1M2 16v-5M2 11l4 4" /><circle cx="12.500" cy="12.500" r="4" fill="#0f78d4" stroke="none" /></Svg>
          </TrayBtn>
          <TrayBtn $w={32}>中</TrayBtn>
          <TrayBtn $w={44}>拼</TrayBtn>
          <TrayBtn $w={32} aria-label="网络">
            <Svg w={16} h={16} sw={1.2}><path d="M10 1.500H1v10h10M3 14.500h7M6.500 11.500v3M11.500 1.500h4v5h-4zM13.500 6.500v6" /></Svg>
          </TrayBtn>
          <TrayBtn $w={18} aria-label="音量">
            <Svg w={17} h={14} sw={1.2}><path d="M1 5v4h3l4 3.500v-11L4 5zM10.500 5c1 1 1 3 0 4M12.500 3c2 2 2 6 0 8M14.500 1c3 3 3 9 0 12" /></Svg>
          </TrayBtn>
          <Clock dateTime="2025-12-16T15:25">15:25<br />2025/12/16</Clock>
        </Tray>
      </Taskbar>
    </Page>
  );
}
